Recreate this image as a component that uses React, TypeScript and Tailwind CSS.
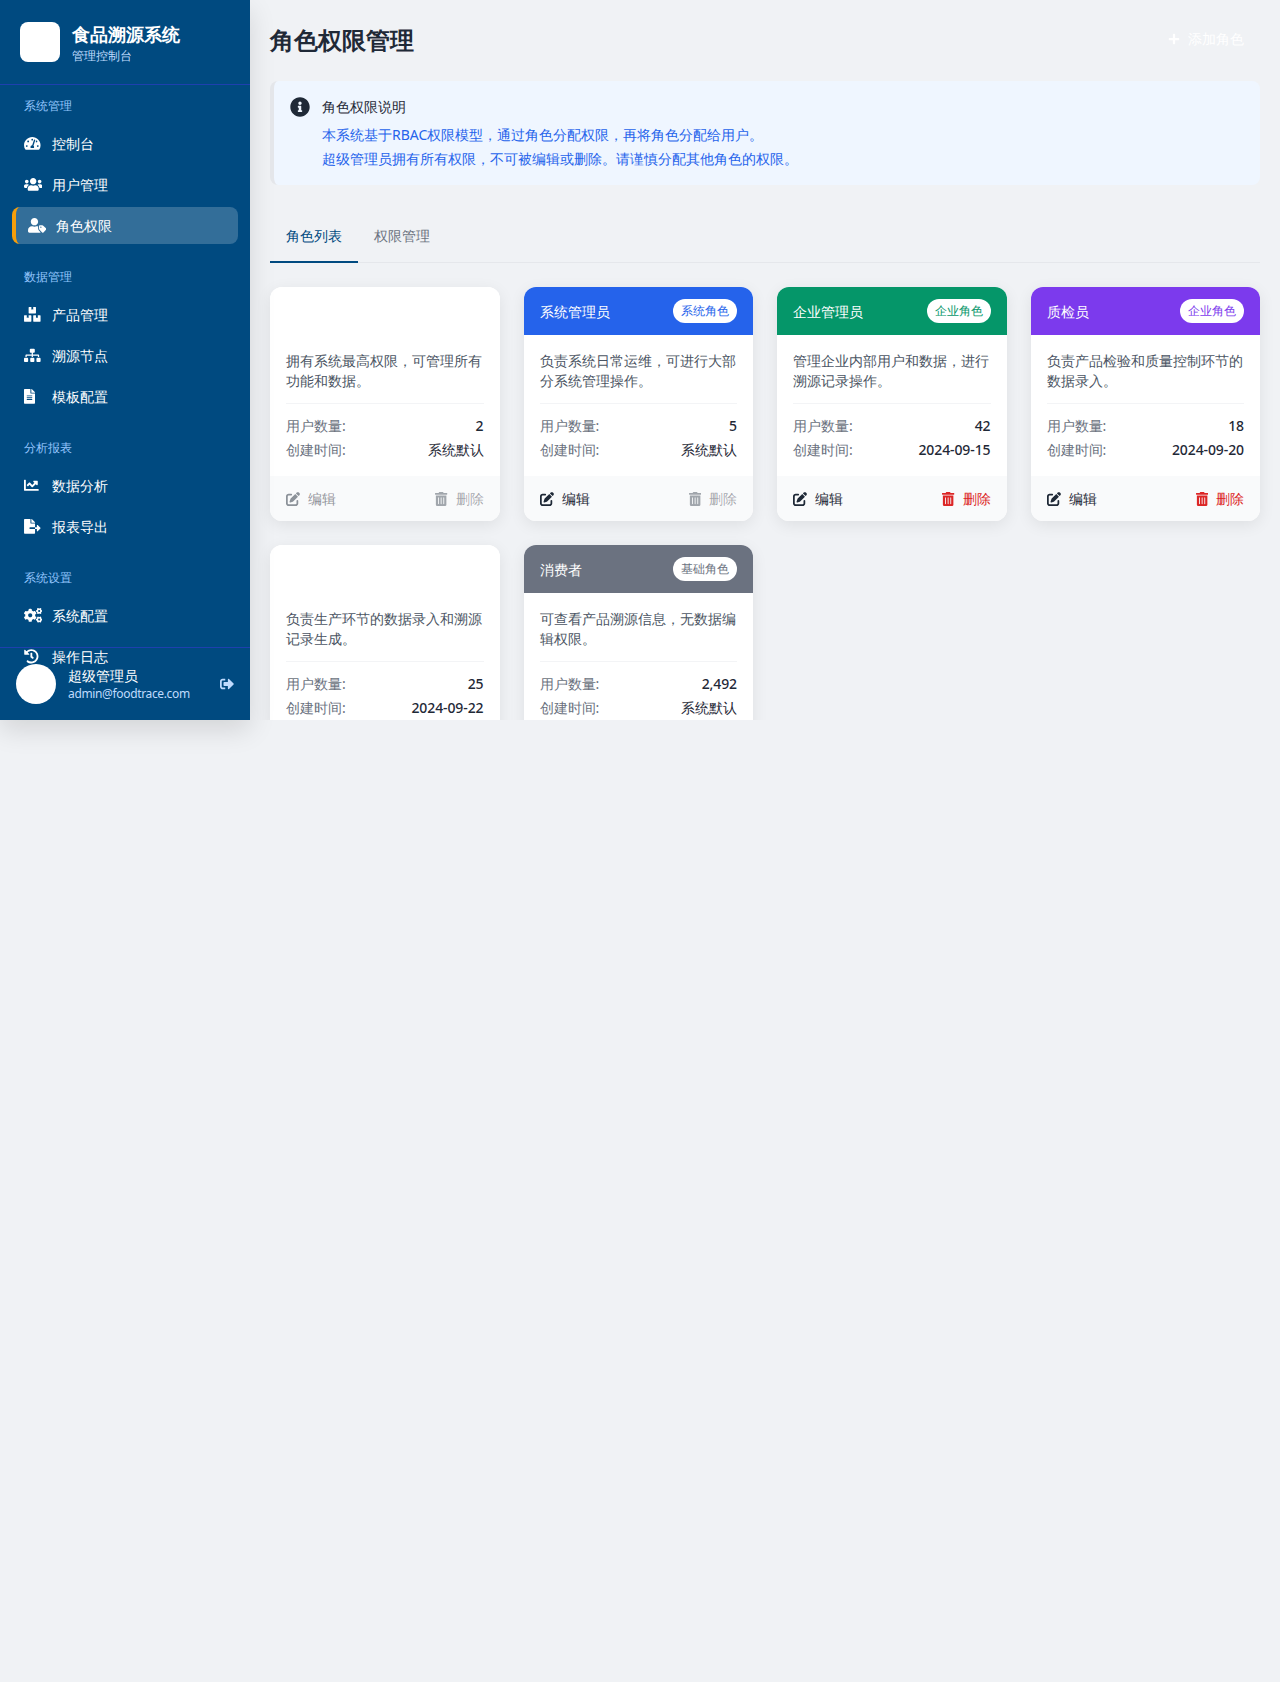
import React from "react";
import {
  FaTachometerAlt, FaUsers, FaUserTag, FaBoxes, FaSitemap, FaFileAlt, FaChartLine,
  FaFileExport, FaCogs, FaHistory, FaSignOutAlt, FaInfoCircle, FaPlus, FaTrashAlt,
} from "react-icons/fa";
import { FaPenToSquare } from "react-icons/fa6";

const groups = [
  { title: "系统管理", items: [
    { label: "控制台", Icon: FaTachometerAlt, size: "h-[14.7px] w-[16.6px]" },
    { label: "用户管理", Icon: FaUsers, size: "h-[14.7px] w-[18.4px]" },
    { label: "角色权限", Icon: FaUserTag, size: "h-[14.7px] w-[18.4px]", active: true },
  ]},
  { title: "数据管理", items: [
    { label: "产品管理", Icon: FaBoxes, size: "h-[14.7px] w-[16.6px]" },
    { label: "溯源节点", Icon: FaSitemap, size: "h-[14.7px] w-[16.6px]" },
    { label: "模板配置", Icon: FaFileAlt, size: "h-[14.7px] w-[11px]" },
  ]},
  { title: "分析报表", items: [
    { label: "数据分析", Icon: FaChartLine, size: "h-[14.7px] w-[14.7px]" },
    { label: "报表导出", Icon: FaFileExport, size: "h-[14.7px] w-[16.6px]" },
  ]},
  { title: "系统设置", items: [
    { label: "系统配置", Icon: FaCogs, size: "h-[14.7px] w-[18.4px]" },
    { label: "操作日志", Icon: FaHistory, size: "h-[14.7px] w-[14.7px]" },
  ]},
];

const roles = [
  { name: "超级管理员", badge: "系统角色", head: "bg-white", badgeText: "text-white", desc: "拥有系统最高权限，可管理所有功能和数据。", users: "2", date: "系统默认", canEdit: false, canDelete: false },
  { name: "系统管理员", badge: "系统角色", head: "bg-[#2563eb]", badgeText: "text-[#2563eb]", desc: "负责系统日常运维，可进行大部分系统管理操作。", users: "5", date: "系统默认", canEdit: true, canDelete: false },
  { name: "企业管理员", badge: "企业角色", head: "bg-[#059669]", badgeText: "text-[#059669]", desc: "管理企业内部用户和数据，进行溯源记录操作。", users: "42", date: "2024-09-15", canEdit: true, canDelete: true },
  { name: "质检员", badge: "企业角色", head: "bg-[#7c3aed]", badgeText: "text-[#7c3aed]", desc: "负责产品检验和质量控制环节的数据录入。", users: "18", date: "2024-09-20", canEdit: true, canDelete: true },
  { name: "生产人员", badge: "企业角色", head: "bg-white", badgeText: "text-white", desc: "负责生产环节的数据录入和溯源记录生成。", users: "25", date: "2024-09-22", canEdit: true, canDelete: true },
  { name: "消费者", badge: "基础角色", head: "bg-[#6b7280]", badgeText: "text-[#6b7280]", desc: "可查看产品溯源信息，无数据编辑权限。", users: "2,492", date: "系统默认", canEdit: false, canDelete: false },
];

function Sidebar() {
  return (
    <aside className="relative z-10 h-[720px] w-[250px] shrink-0 bg-[#004a80] text-white shadow-[0_10px_25px_rgba(0,0,0,0.12)]">
      <div className="flex h-[85px] items-center gap-3 border-b border-[#1e40af] px-5">
        <div className="size-10 rounded-lg bg-white" />
        <div>
          <div className="text-lg leading-[28px] font-bold">食品溯源系统</div>
          <div className="text-xs leading-[16px] text-[#bfdbfe]">管理控制台</div>
        </div>
      </div>
      <nav className="pt-[10px]">
        {groups.map((g) => (
          <div key={g.title} className="mb-[22px]">
            <div className="mb-[9px] px-6 pt-[1px] text-xs leading-[20px] text-[#93c5fd]">{g.title}</div>
            {g.items.map(({ label, Icon, size, active }) => (
              <div
                key={label}
                className={
                  active
                    ? "mx-3 mb-1 flex h-[37px] items-center gap-[12px] rounded-lg border-l-4 border-[#f59e0b] bg-white/20 px-3 text-sm font-medium"
                    : "mx-3 mb-1 flex h-[37px] items-center gap-[12px] rounded-lg px-3 text-sm font-medium"
                }
              >
                <span className="flex w-4 justify-start">
                  <Icon className={`shrink-0 ${size}`} />
                </span>
                <span>{label}</span>
              </div>
            ))}
          </div>
        ))}
      </nav>
      <div className="absolute inset-x-0 bottom-0 flex h-[73px] items-center gap-3 border-t border-[#1e40af] px-4">
        <div className="size-10 shrink-0 rounded-full bg-white" />
        <div className="flex-1">
          <div className="text-sm leading-[20px] font-medium">超级管理员</div>
          <div className="text-xs leading-[16px] tracking-[-0.35px] text-[#bfdbfe]">admin@foodtrace.com</div>
        </div>
        <FaSignOutAlt className="size-[14px] text-[#bfdbfe]" />
      </div>
    </aside>
  );
}

function RoleCard({ r }: { r: (typeof roles)[number] }) {
  return (
    <div className="overflow-hidden rounded-xl bg-white shadow-[0_4px_16px_rgba(0,0,0,0.08)]">
      <div className={`flex h-12 items-center justify-between px-4 ${r.head}`}>
        <span className="pt-[1px] text-sm leading-[20px] font-medium text-white">{r.name}</span>
        <span className={`rounded-full bg-white px-2 text-xs leading-[24px] ${r.badgeText}`}>{r.badge}</span>
      </div>
      <div className="p-4">
        <p className="mb-3 text-sm leading-[20px] text-[#4b5563]">{r.desc}</p>
        <div className="border-t border-[#f3f4f6] pt-3">
          <div className="mb-1 flex justify-between text-sm leading-[20px]">
            <span className="text-[#6b7280]">用户数量:</span>
            <span className="font-medium tracking-[-0.1px] text-[#1f2937]">{r.users}</span>
          </div>
          <div className="flex justify-between text-sm leading-[20px]">
            <span className="text-[#6b7280]">创建时间:</span>
            <span className="font-medium tracking-[-0.1px] text-[#1f2937]">{r.date}</span>
          </div>
        </div>
      </div>
      <div className="flex h-[45px] items-center justify-between bg-[#f9fafb] px-4 text-sm">
        <span className={`flex items-center gap-2 ${r.canEdit ? "text-[#1f2937]" : "text-[#1f2937]/50"}`}>
          <FaPenToSquare className="size-[14px]" />
          <span>编辑</span>
        </span>
        <span className={`flex items-center gap-2 ${r.canDelete ? "text-[#dc2626]" : "text-[#1f2937]/40"}`}>
          <FaTrashAlt className="h-[14px] w-[12.25px]" />
          <span>删除</span>
        </span>
      </div>
    </div>
  );
}

export default function App() {
  return (
    <div
      className="flex min-h-[1682px] items-start bg-[#f0f2f5]"
      style={{ fontFamily: '"Noto Sans", sans-serif' }}
    >
      <Sidebar />
      <main className="h-[720px] min-w-0 flex-1 overflow-hidden p-5">
        <div className="mb-[21px] flex h-10 items-center justify-between">
          <h1 className="text-2xl font-bold text-[#1f2937]">角色权限管理</h1>
          <div className="flex items-center gap-2 px-4 pb-[2px] text-sm text-white">
            <FaPlus className="size-3" />
            <span>添加角色</span>
          </div>
        </div>

        <div className="flex gap-3 rounded-lg border-l-4 border-[#e5e7eb] bg-[#eff6ff] px-4 pt-4 pb-[14px]">
          <FaInfoCircle className="size-5 shrink-0 text-[#1f2937]" />
          <div className="text-sm">
            <div className="mb-[6px] leading-[20px] text-[#1f2937]">角色权限说明</div>
            <div className="leading-[24px] text-[#2563eb]">本系统基于RBAC权限模型，通过角色分配权限，再将角色分配给用户。</div>
            <div className="leading-[24px] text-[#2563eb]">超级管理员拥有所有权限，不可被编辑或删除。请谨慎分配其他角色的权限。</div>
          </div>
        </div>

        <div className="mt-6 mb-6 flex border-b border-[#e5e7eb] text-sm">
          <div className="-mb-px border-b-2 border-[#004a80] px-4 pt-[17px] pb-[15px] leading-[20px] font-medium text-[#004a80]">角色列表</div>
          <div className="px-4 pt-[17px] pb-[15px] leading-[20px] text-[#6b7280]">权限管理</div>
        </div>

        <div className="grid grid-cols-4 gap-6">
          {roles.map((r) => (
            <RoleCard key={r.name} r={r} />
          ))}
        </div>
      </main>
    </div>
  );
}
